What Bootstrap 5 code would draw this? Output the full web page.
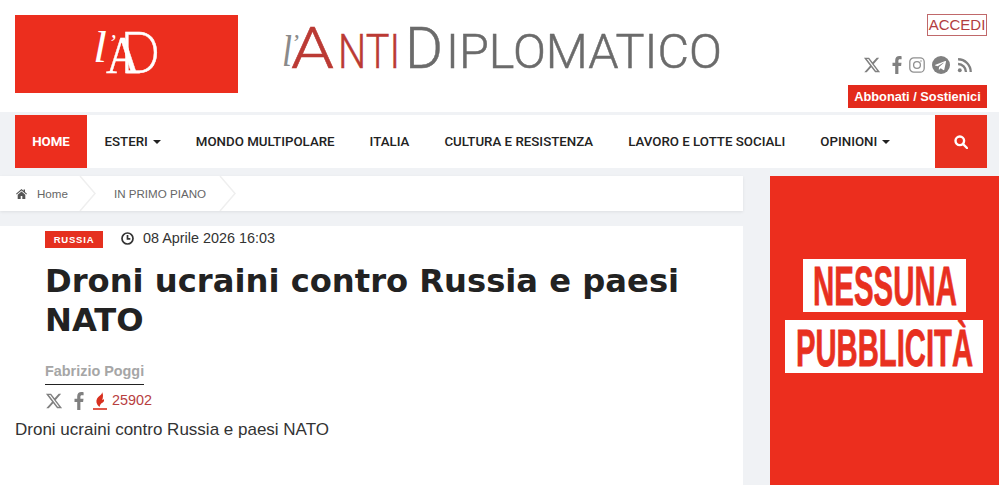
<!DOCTYPE html>
<html lang="it">
<head>
<meta charset="utf-8">
<title>l'AntiDiplomatico</title>
<link href="https://cdn.jsdelivr.net/npm/bootstrap@5.3.0/dist/css/bootstrap.min.css" rel="stylesheet">
<style>
html,body{height:490px;overflow:hidden;background:#fff}
body{font-family:"Liberation Sans",Arial,sans-serif;color:#222}
.ad-top{height:112px;padding:14px 12px 0 15px}
.ad-brand{width:223px;height:78px;margin-top:1px;background:#ec2e1e}
.ad-wordmark{width:450px;height:60px;margin:6px 0 0 42px}
.ad-tools{width:140px;margin-left:auto}
.ad-login{width:60px;height:22px;border:1px solid #c0686a;color:#b23c40;font-size:15px;line-height:20px;text-align:center;text-decoration:none}
.ad-social{height:24px;margin-top:17px;margin-bottom:8px;padding-left:16px;gap:7px}
.ad-social-x{margin-right:4px}
.ad-support{width:139px;height:23px;background:#e32a1c;color:#fff;font-size:12.8px;font-weight:700;line-height:23px;text-align:center;text-decoration:none}
.ad-shell{background:#f0f2f5;height:373px;padding-top:3px}
.ad-menu{height:53px;margin:0 12px 8px 15px;background:#fff;padding:0}
.ad-menu .nav-link{height:53px;padding:0 17.5px;color:#222;font-family:Roboto,"Liberation Sans",sans-serif;font-size:13.3px;font-weight:500;line-height:53px;white-space:nowrap}
.ad-menu .nav-link.active{background:#ec2e1e;color:#fff;width:72px;padding:0;text-align:center;font-weight:700}
.ad-caret{display:inline-block;width:0;height:0;margin-left:5px;vertical-align:2px;border:4px solid transparent;border-top-color:#222;border-bottom:0}
.ad-search{width:52px;height:53px;background:#e8301f;margin-left:auto}
.ad-main{height:309px}
.ad-left{width:743px}
.ad-crumbs{height:35px;background:#fff;box-shadow:0 1px 3px rgba(0,0,0,.08);margin:0 0 15px;padding-left:16px;font-size:11.6px;color:#666;line-height:34px}
.ad-crumbs svg{flex:none}
.ad-crumb-home{margin-left:10px}
.ad-crumb-sep{margin-left:11px}
.ad-crumb-next{margin-left:17px}
.ad-crumb-last{margin-left:13px}
.ad-story{height:259px;background:#fff}
.ad-story-in{padding:2px 0 0 45px}
.ad-tag{width:58px;height:17px;margin-top:2px;background:#e5301f;color:#fff;font-size:9.5px;font-weight:700;letter-spacing:.8px;line-height:17px;text-align:center}
.ad-date{font-size:14.4px;color:#333;margin-left:18px;gap:9px}
.ad-title{font-family:"DejaVu Sans",Verdana,sans-serif;font-weight:700;font-size:32.2px;line-height:39px;color:#222;margin:12px 0 0;width:660px}
.ad-author{display:inline-block;margin-top:21px;padding-bottom:3px;border-bottom:1px solid #222;font-size:14.4px;font-weight:700;color:#a6a6a6;line-height:20px}
.ad-share{height:20px;margin-top:6px}
.ad-share-f{margin-left:11px}
.ad-share-flame{margin-left:9px}
.ad-count{color:#b8403f;font-size:14.4px;margin-left:5px}
.ad-lead{margin:9px 0 0 15px;font-size:17px;line-height:20px;color:#333}
.ad-side{width:229px;height:309px;background:#ec2e1e;margin-left:27px}
</style>
</head>
<body>
<header class="ad-top d-flex bg-white">
  <a href="#" class="ad-brand d-block">
    <svg width="223" height="78" viewBox="0 0 223 78">
      <g fill="#fff">
        <text x="78" y="47" font-family="Liberation Serif" font-style="italic" font-size="44" textLength="14" lengthAdjust="spacingAndGlyphs">l</text>
        <text x="93" y="35" font-family="Liberation Serif" font-style="italic" font-size="24">’</text>
        <text x="105" y="58" font-family="Lato" font-weight="300" font-size="57" textLength="40" lengthAdjust="spacingAndGlyphs" stroke="#fff" stroke-width=".5">D</text>
        <text x="91" y="58" font-family="Liberation Serif" font-size="53" textLength="34" lengthAdjust="spacingAndGlyphs" stroke="#fff" stroke-width=".4">A</text>
      </g>
    </svg>
  </a>
  <a href="#" class="ad-wordmark d-block">
    <svg width="450" height="60" viewBox="0 0 450 60">
      <text x="2" y="46" font-family="Liberation Serif" font-style="italic" font-size="44" fill="#8a8a8a" textLength="10" lengthAdjust="spacingAndGlyphs">l</text>
      <text x="11" y="30" font-family="Liberation Serif" font-style="italic" font-size="24" fill="#8a8a8a">’</text>
      <g font-family="Roboto" font-weight="300" stroke-width=".5">
        <text x="11" y="48" font-size="58" fill="#bb3a34" stroke="#bb3a34" textLength="43" lengthAdjust="spacingAndGlyphs">A</text>
        <text x="58" y="48" font-size="49" fill="#bb3a34" stroke="#bb3a34" textLength="62" lengthAdjust="spacingAndGlyphs">NTI</text>
        <text x="125" y="48" font-size="58" fill="#6b6b6b" stroke="#6b6b6b" textLength="38" lengthAdjust="spacingAndGlyphs">D</text>
        <text x="166" y="48" font-size="49" fill="#6b6b6b" stroke="#6b6b6b" textLength="276" lengthAdjust="spacingAndGlyphs">IPLOMATICO</text>
      </g>
    </svg>
  </a>
  <div class="ad-tools d-flex flex-column align-items-end">
    <a href="#" class="ad-login d-block">ACCEDI</a>
    <div class="ad-social d-flex align-items-center align-self-stretch">
      <svg class="ad-social-x" width="18" height="18" viewBox="0 0 24 24" fill="#808080"><path d="M18.244 2.25h3.308l-7.227 8.26 8.502 11.24H16.17l-5.214-6.817L4.99 21.75H1.68l7.73-8.835L1.254 2.25H8.08l4.713 6.231zm-1.161 17.52h1.833L7.084 4.126H5.117z"/></svg>
      <svg width="10" height="18" viewBox="0 0 10 18" fill="#808080"><path d="M6.4 18V9.9h2.7l.4-3.2H6.4v-2c0-.9.3-1.5 1.6-1.5h1.6V.3C9.3.2 8.400 0 7.300 0 4.900 0 3.200 1.500 3.200 4.200v2.500H.5v3.200h2.700V18z"/></svg>
      <svg width="16" height="16" viewBox="0 0 16 16" fill="none" stroke="#909090" stroke-width="1.300"><rect x=".8" y=".8" width="14.400" height="14.400" rx="4"/><circle cx="8" cy="8" r="3.400"/><circle cx="12" cy="4" r=".7" fill="#808080" stroke="none"/></svg>
      <svg class="ms-0" width="18" height="18" viewBox="0 0 18 18"><circle cx="9" cy="9" r="9" fill="#808080"/><path d="M3.500 8.800 13.300 5c.5-.2.9.1.700.8l-1.700 7.800c-.1.600-.5.700-1 .4L8.700 12.200 7.400 13.400c-.2.200-.3.300-.6.300l.2-2.600 4.600-4.200c.2-.2 0-.3-.3-.1L5.600 10.300 3.300 9.600c-.5-.2-.5-.5.200-.8z" fill="#fff"/></svg>
      <svg width="15" height="15" viewBox="0 0 14 14" fill="none" stroke="#808080" stroke-width="2.200"><path d="M1 5.600a7.500 7.500 0 0 1 7.400 7.400"/><path d="M1 1.200a11.800 11.800 0 0 1 11.800 11.800"/><circle cx="2.600" cy="11.400" r="1.800" fill="#808080" stroke="none"/></svg>
    </div>
    <a href="#" class="ad-support d-block">Abbonati / Sostienici</a>
  </div>
</header>
<div class="ad-shell">
  <nav class="navbar ad-menu flex-nowrap justify-content-start">
    <ul class="nav flex-nowrap">
      <li class="nav-item"><a class="nav-link active" href="#">HOME</a></li>
      <li class="nav-item"><a class="nav-link" href="#">ESTERI<span class="ad-caret"></span></a></li>
      <li class="nav-item"><a class="nav-link" href="#">MONDO MULTIPOLARE</a></li>
      <li class="nav-item"><a class="nav-link" href="#">ITALIA</a></li>
      <li class="nav-item"><a class="nav-link" href="#">CULTURA E RESISTENZA</a></li>
      <li class="nav-item"><a class="nav-link" href="#">LAVORO E LOTTE SOCIALI</a></li>
      <li class="nav-item"><a class="nav-link" href="#">OPINIONI<span class="ad-caret"></span></a></li>
    </ul>
    <a href="#" class="ad-search d-flex align-items-center justify-content-center">
      <svg width="14" height="14" viewBox="0 0 14 14" fill="none" stroke="#fff" stroke-width="2.400"><circle cx="5.800" cy="5.800" r="4.300"/><path d="M9 9l4 4" stroke-linecap="round"/></svg>
    </a>
  </nav>
  <div class="ad-main d-flex">
    <div class="ad-left">
      <nav class="ad-crumbs d-flex align-items-center">
        <svg width="11" height="10" viewBox="0 0 11 10" fill="#555"><path d="M5.500 0 0 4.800l.7.700L5.500 1.400l4.800 4.100.7-.7L9 3V.5H7.600v1.300zM1.700 5.800V10h3V7h1.600v3h3V5.800L5.500 2.500z"/></svg>
        <span class="ad-crumb-home">Home</span>
        <svg class="ad-crumb-sep" width="18" height="35" viewBox="0 0 18 35" fill="none" stroke="#efefef" stroke-width="1.500"><path d="M1 0 16 17.500 1 35"/></svg>
        <span class="ad-crumb-next">IN PRIMO PIANO</span>
        <svg class="ad-crumb-last" width="18" height="35" viewBox="0 0 18 35" fill="none" stroke="#efefef" stroke-width="1.500"><path d="M1 0 16 17.500 1 35"/></svg>
      </nav>
      <article class="ad-story">
        <div class="ad-story-in">
          <div class="d-flex align-items-center">
            <span class="ad-tag d-block">RUSSIA</span>
            <span class="ad-date d-flex align-items-center">
              <svg width="13" height="13" viewBox="0 0 13 13" fill="none" stroke="#333" stroke-width="1.700"><circle cx="6.500" cy="6.500" r="5.500"/><path d="M6.500 3v3.800H9.300"/></svg>
              08 Aprile 2026 16:03
            </span>
          </div>
          <h1 class="ad-title">Droni ucraini contro Russia e paesi NATO</h1>
          <div class="ad-author">Fabrizio Poggi</div>
          <div class="ad-share d-flex align-items-center">
            <svg width="18" height="18" viewBox="0 0 24 24" fill="#808080"><path d="M18.244 2.25h3.308l-7.227 8.26 8.502 11.24H16.17l-5.214-6.817L4.99 21.75H1.68l7.73-8.835L1.254 2.25H8.08l4.713 6.231zm-1.161 17.52h1.833L7.084 4.126H5.117z"/></svg>
            <svg class="ad-share-f" width="10" height="18" viewBox="0 0 10 18" fill="#808080"><path d="M6.4 18V9.9h2.7l.4-3.2H6.4v-2c0-.9.3-1.5 1.6-1.5h1.6V.3C9.3.2 8.400 0 7.300 0 4.900 0 3.200 1.500 3.200 4.200v2.500H.5v3.200h2.700V18z"/></svg>
            <svg class="ad-share-flame" width="14" height="18" viewBox="0 0 14 18"><path d="M9 0c.6 2.400-3.400 3.800-5 6.800C2.700 9.300 3.300 12.300 6.500 15c.2-1.700 1.300-3.400 3.300-4.400 1.300-.7 1.500-2.300 1-3.500-.5.600-1 .9-1.500 1C10 5 10.600 2.500 9 0z" fill="#d8301f"/><rect x="0" y="16.200" width="14" height="1.600" fill="#d8301f"/></svg>
            <span class="ad-count">25902</span>
          </div>
        </div>
        <p class="ad-lead">Droni ucraini contro Russia e paesi NATO</p>
      </article>
    </div>
    <aside class="ad-side">
      <svg width="229" height="309" viewBox="0 0 229 309">
        <rect x="33" y="83" width="163" height="53" fill="#fff"/>
        <rect x="15" y="144" width="198" height="53" fill="#fff"/>
        <g font-family="Liberation Sans Narrow,Liberation Sans" font-weight="700" fill="#e8301f" stroke="#e8301f" stroke-width=".8">
          <text x="43" y="129" font-size="56" textLength="144" lengthAdjust="spacingAndGlyphs">NESSUNA</text>
          <text x="26" y="190" font-size="52" textLength="177" lengthAdjust="spacingAndGlyphs">PUBBLICITÀ</text>
        </g>
      </svg>
    </aside>
  </div>
</div>
</body>
</html>
